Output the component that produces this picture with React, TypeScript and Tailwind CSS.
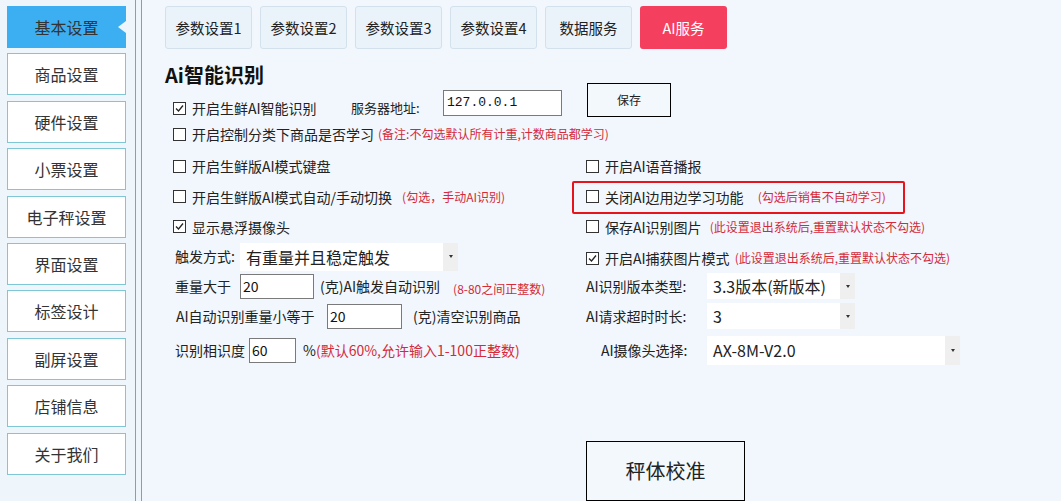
import React from "react";

const RED = "text-[#d42a3a]";

function Check({ checked }: { checked?: boolean }) {
  return (
    <span className="flex h-[13px] w-[13px] shrink-0 items-center justify-center border border-[#333] bg-white">
      {checked && (
        <svg width="11" height="11" viewBox="0 0 11 11">
          <path d="M2 5.5 L4.5 8 L9 2.5" fill="none" stroke="#222" strokeWidth="1.3" />
        </svg>
      )}
    </span>
  );
}

function CheckLabel({ checked, label }: { checked?: boolean; label: string }) {
  return (
    <div className="flex items-center gap-[6px] text-[14px] leading-[20px] text-[#222]">
      <Check checked={checked} />
      <span className="whitespace-nowrap">{label}</span>
    </div>
  );
}

function Select({ value, className }: { value: string; className: string }) {
  return (
    <div className={`flex bg-white ${className}`}>
      <div className="flex flex-1 items-center whitespace-nowrap pl-[6px] text-[16px] text-[#222]">{value}</div>
      <div className="flex w-[15px] items-center justify-center bg-[#efefef]">
        <span className="h-0 w-0 border-x-[2.5px] border-t-[3px] border-x-transparent border-t-[#333]" />
      </div>
    </div>
  );
}

function Input({ value, className }: { value: string; className: string }) {
  return (
    <div className={`border border-[#7a7a7a] bg-white pl-[2px] pt-[3px] text-[14px] leading-[16px] text-[#111] ${className}`}>
      {value}
    </div>
  );
}

const sideItems = ["基本设置", "商品设置", "硬件设置", "小票设置", "电子秤设置", "界面设置", "标签设计", "副屏设置", "店铺信息", "关于我们"];
const tabs = ["参数设置1", "参数设置2", "参数设置3", "参数设置4", "数据服务"];

export default function App() {
  return (
    <div className="flex h-[501px] w-[1061px] overflow-hidden bg-[#f1f7fc] font-['Microsoft_YaHei','Noto_Sans_CJK_SC',sans-serif] text-[#222]">
      <aside className="flex h-full w-[136px] shrink-0 flex-col gap-[5.4px] border-r border-[#9a9a9a] bg-[#eef6fb] pl-[7px] pt-[6px]">
        {sideItems.map((s, i) =>
          i === 0 ? (
            <div key={s} className="relative flex h-[42px] w-[119px] items-center justify-center bg-[#3caef2] text-[16px] text-[#333]">
              {s}
              <span className="absolute right-0 top-[15px] h-0 w-0 border-y-[6px] border-r-[8px] border-y-transparent border-r-[#eef6fb]" />
            </div>
          ) : (
            <div key={s} className="flex h-[42px] w-[119px] items-center justify-center border border-[#80c7d6] bg-white text-[16px] text-[#333]">
              {s}
            </div>
          )
        )}
      </aside>
      <div className="h-full w-[6px] shrink-0 border-r border-[#9a9a9a] bg-[#eef6fb]" />
      <main className="flex-1 pl-[23px] pt-[6px]">
        <div className="flex gap-[8px]">
          {tabs.map((t) => (
            <div key={t} className="flex h-[43px] w-[87px] items-center justify-center rounded-[3px] border border-[#d3e1ec] bg-[#ebf3fa] text-[14.5px] text-[#222]">
              {t}
            </div>
          ))}
          <div className="flex h-[43px] w-[87px] items-center justify-center rounded-[3px] bg-[#f43f5e] text-[14.5px] text-white">AI服务</div>
        </div>

        <div className="mt-[14px] h-[24px] text-[20px] font-bold leading-[24px] text-[#111]">Ai智能识别</div>

        <div className="flex h-[30px] items-start">
          <div className="ml-[8px] mt-[11px] w-[178px]">
            <CheckLabel checked label="开启生鲜AI智能识别" />
          </div>
          <div className="mt-[11px] w-[92px] text-[13px] leading-[20px]">服务器地址:</div>
          <div className="mt-[3px] h-[26px] w-[119px] border border-[#7a7a7a] bg-white pl-[3px] pt-[4px] font-['Liberation_Mono',monospace] text-[13px] leading-[16px] text-[#111]">
            127.0.0.1
          </div>
          <div className="-mt-[4px] ml-[25px] flex h-[34px] w-[84px] items-center justify-center border border-black bg-[#f3f8fc] text-[12px]">
            保存
          </div>
        </div>

        <div className="ml-[8px] mt-[7px] flex h-[20px] items-center">
          <CheckLabel label="开启控制分类下商品是否学习" />
          <span className={`ml-[4px] whitespace-nowrap text-[12px] ${RED}`}>(备注:不勾选默认所有计重,计数商品都学习)</span>
        </div>

        <div className="mt-[7px] flex flex-col text-[14px]">
          <div className="flex h-[30px] items-center">
            <div className="w-[421px] pl-[8px]">
              <CheckLabel label="开启生鲜版AI模式键盘" />
            </div>
            <CheckLabel label="开启AI语音播报" />
          </div>
          <div className="flex h-[31px] items-center">
            <div className="flex w-[421px] items-center pl-[8px]">
              <CheckLabel label="开启生鲜版AI模式自动/手动切换" />
              <span className={`ml-[10px] whitespace-nowrap text-[12px] ${RED}`}>(勾选，手动AI识别)</span>
            </div>
            <div className="relative flex items-center">
              <CheckLabel label="关闭AI边用边学习功能" />
              <span className={`ml-[14px] whitespace-nowrap text-[12px] ${RED}`}>(勾选后销售不自动学习)</span>
              <div className="absolute -left-[14px] -top-[6px] h-[33px] w-[333px] rounded-[2px] border-2 border-[#e8141c]" />
            </div>
          </div>
          <div className="flex h-[29px] items-center">
            <div className="w-[421px] pl-[8px]">
              <CheckLabel checked label="显示悬浮摄像头" />
            </div>
            <div className="flex items-center">
              <CheckLabel label="保存AI识别图片" />
              <span className={`ml-[8px] whitespace-nowrap text-[12px] ${RED}`}>(此设置退出系统后,重置默认状态不勾选)</span>
            </div>
          </div>
          <div className="flex h-[31px] items-center">
            <div className="flex w-[421px] items-center pl-[10px]">
              <span className="w-[65px] whitespace-nowrap">触发方式:</span>
              <Select value="有重量并且稳定触发" className="h-[28px] w-[218px]" />
            </div>
            <div className="mt-[3px] flex items-center">
              <CheckLabel checked label="开启AI捕获图片模式" />
              <span className={`ml-[5px] whitespace-nowrap text-[12px] ${RED}`}>(此设置退出系统后,重置默认状态不勾选)</span>
            </div>
          </div>
          <div className="flex h-[28px] items-center">
            <div className="flex w-[421px] items-center pl-[10px]">
              <span className="w-[65px] whitespace-nowrap">重量大于</span>
              <Input value="20" className="h-[25px] w-[74px]" />
              <span className="ml-[6px] whitespace-nowrap">(克)AI触发自动识别</span>
              <span className={`ml-[13px] mt-[5px] whitespace-nowrap text-[12px] ${RED}`}>(8-80之间正整数)</span>
            </div>
            <div className="flex items-center">
              <span className="w-[121px] whitespace-nowrap">AI识别版本类型:</span>
              <Select value="3.3版本(新版本)" className="h-[26px] w-[148px]" />
            </div>
          </div>
          <div className="flex h-[32px] items-center">
            <div className="flex w-[421px] items-center pl-[11px]">
              <span className="w-[151px] whitespace-nowrap">AI自动识别重量小等于</span>
              <Input value="20" className="h-[25px] w-[75px]" />
              <span className="ml-[11px] whitespace-nowrap">(克)清空识别商品</span>
            </div>
            <div className="flex items-center">
              <span className="w-[121px] whitespace-nowrap">AI请求超时时长:</span>
              <Select value="3" className="h-[26px] w-[148px]" />
            </div>
          </div>
          <div className="flex h-[36px] items-center">
            <div className="flex w-[421px] items-center pl-[10px]">
              <span className="w-[74px] whitespace-nowrap">识别相识度</span>
              <Input value="60" className="h-[25px] w-[47px]" />
              <span className="ml-[7px]">%</span>
              <span className={`whitespace-nowrap ${RED}`}>(默认60%,允许输入1-100正整数)</span>
            </div>
            <div className="flex items-center">
              <span className="w-[121px] whitespace-nowrap pl-[15px]">AI摄像头选择:</span>
              <Select value="AX-8M-V2.0" className="h-[29px] w-[253px]" />
            </div>
          </div>
        </div>

        <div className="ml-[421px] mt-[73px] flex h-[60px] w-[159px] items-center justify-center border border-black bg-[#f3f8fc] text-[20px] text-[#222]">
          秤体校准
        </div>
      </main>
    </div>
  );
}
